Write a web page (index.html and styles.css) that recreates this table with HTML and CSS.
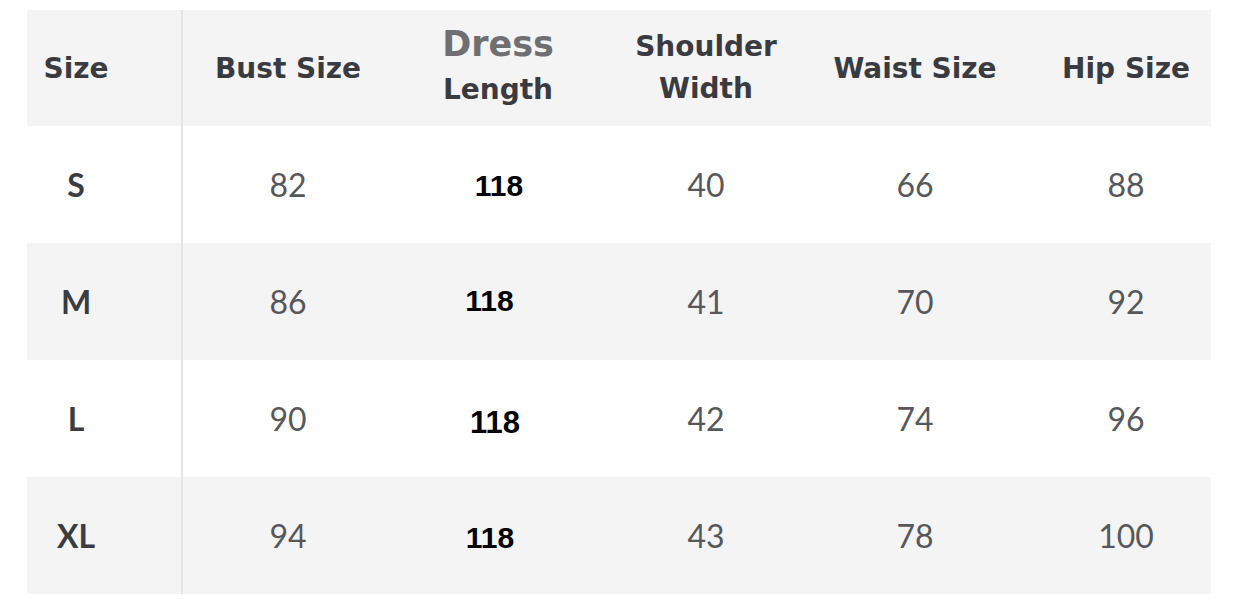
FILE: index.html
```html
<!DOCTYPE html>
<html>
<head>
<meta charset="utf-8">
<link rel="stylesheet" href="styles.css">
</head>
<body>
<div class="table">
  <div class="row head">
    <div class="cell c1">Size</div>
    <div class="cell c2">Bust Size</div>
    <div class="cell c3 two"><span class="dress">Dress</span><span>Length</span></div>
    <div class="cell c4 two"><span>Shoulder</span><span>Width</span></div>
    <div class="cell c5">Waist Size</div>
    <div class="cell c6">Hip Size</div>
  </div>
  <div class="row">
    <div class="cell c1 sz">S</div>
    <div class="cell c2 num">82</div>
    <div class="cell c3"><span class="len r1">118</span></div>
    <div class="cell c4 num">40</div>
    <div class="cell c5 num">66</div>
    <div class="cell c6 num">88</div>
  </div>
  <div class="row alt">
    <div class="cell c1 sz">M</div>
    <div class="cell c2 num">86</div>
    <div class="cell c3"><span class="len r2">118</span></div>
    <div class="cell c4 num">41</div>
    <div class="cell c5 num">70</div>
    <div class="cell c6 num">92</div>
  </div>
  <div class="row">
    <div class="cell c1 sz">L</div>
    <div class="cell c2 num">90</div>
    <div class="cell c3"><span class="len r3">118</span></div>
    <div class="cell c4 num">42</div>
    <div class="cell c5 num">74</div>
    <div class="cell c6 num">96</div>
  </div>
  <div class="row alt last">
    <div class="cell c1 sz">XL</div>
    <div class="cell c2 num">94</div>
    <div class="cell c3"><span class="len r4">118</span></div>
    <div class="cell c4 num">43</div>
    <div class="cell c5 num">78</div>
    <div class="cell c6 num">100</div>
  </div>
</div>
</body>
</html>
```
FILE: styles.css
```css
html, body {
  margin: 0;
  padding: 0;
  background: #ffffff;
}
body {
  font-family: "Lato", "Open Sans", sans-serif;
  color: #3b3c42;
}
.table {
  margin: 10px 0 0 27px;
  width: 1184px;
  display: flex;
  flex-direction: column;
}
.row {
  display: flex;
  height: 117px;
  background: #ffffff;
}
.row.head {
  height: 116px;
  background: #f4f4f5;
}
.row.alt {
  background: #f4f4f5;
}
.cell {
  display: flex;
  align-items: center;
  justify-content: center;
  box-sizing: border-box;
}
.c1 { width: 154px; padding-right: 56px; }
.c2 { width: 212px; border-left: 2px solid #e4e4e6; }
.c3 { width: 210px; }
.c4 { width: 206px; }
.c5 { width: 212px; }
.c6 { width: 190px; padding-left: 20px; }
.head .cell {
  font-family: "DejaVu Sans", "Lato", sans-serif;
  font-weight: 700;
  font-size: 28px;
  color: #3a3b41;
  line-height: 1;
  padding-top: 2px;
}
.head .c1 { padding-top: 2px; padding-right: 56px; }
.head .c6 { padding-left: 20px; }
.head .c3 { padding-top: 0; padding-bottom: 6px; gap: 14px; }
.two {
  flex-direction: column;
  gap: 12px;
}
.head .c4 { gap: 14px; padding-top: 0; }
.dress {
  color: #6f6f72;
  font-size: 35px;
}
.sz {
  font-weight: 700;
  font-size: 32px;
  color: #3b3c42;
}
.num {
  font-size: 32px;
  color: #57585c;
  font-weight: 400;
}
.len {
  font-family: "Liberation Sans", Arial, sans-serif;
  font-weight: 700;
  font-size: 30px;
  color: #000000;
}
.len.r1 { margin-left: 2px; margin-top: 2px; }
.len.r2 { margin-left: -17px; margin-top: -2px; }
.len.r3 { margin-left: -6px; margin-top: 8px; font-size: 31px; }
.len.r4 { margin-left: -16px; margin-top: 4px; }
```
